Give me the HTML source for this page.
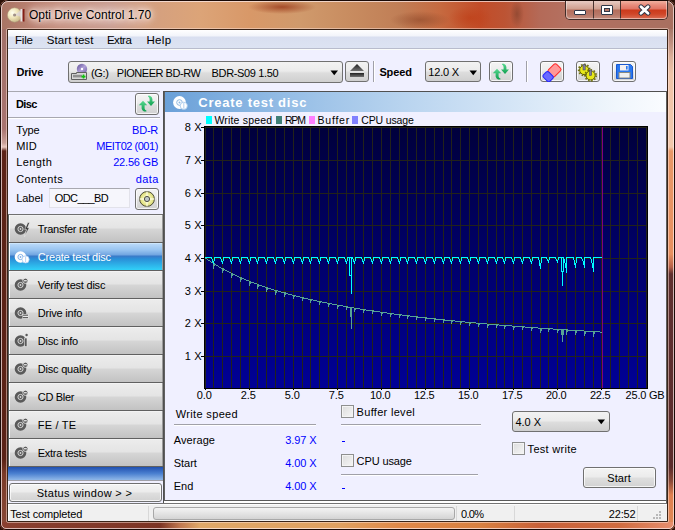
<!DOCTYPE html><html><head><meta charset="utf-8"><style>html,body{margin:0;padding:0;width:675px;height:530px;overflow:hidden;background:#2a1008}</style></head><body><div style="position:relative;width:675px;height:530px;overflow:hidden"><div style="position:absolute;left:0;top:0;width:675px;height:530px;border-radius:8px 8px 6px 6px;overflow:hidden;background:#6a2c1c">
<div style="position:absolute;left:0;top:0;width:675px;height:30px;background:radial-gradient(ellipse 34px 7px at 282px 7px,rgba(150,50,20,0.75),rgba(150,50,20,0) 100%),radial-gradient(ellipse 30px 9px at 420px 20px,rgba(140,70,40,0.6),rgba(140,70,40,0) 100%),radial-gradient(ellipse 7px 14px at 517px 14px,rgba(120,60,40,0.55),rgba(120,60,40,0) 100%),radial-gradient(ellipse 22px 12px at 470px 18px,rgba(190,60,20,0.6),rgba(190,60,20,0) 100%),linear-gradient(90deg,#a87464 0px,#b88070 30px,#c49080 60px,#c89c90 110px,#d4a080 150px,#dca478 200px,#d89868 250px,#d09a6c 300px,#c88c60 350px,#c07e56 400px,#c66a40 440px,#c24c28 480px,#bc5434 505px,#b46a58 540px,#b47060 565px,#a87060 675px)"></div>
<div style="position:absolute;left:0;top:29px;width:8px;height:501px;background:linear-gradient(180deg,#a27068 0px,#a87470 100px,#c8a098 114px,#e8c8c0 118px,#5c2418 122px,#5a2216 430px,#7a3a28 445px,#8a4a38 501px)"></div>
<div style="position:absolute;left:667px;top:29px;width:8px;height:501px;background:linear-gradient(180deg,#a87868 0px,#c09080 14px,#dcb09a 28px,#f0c4a8 45px,#f2c8ac 118px,#e89868 122px,#e89060 225px,#b86048 238px,#603030 245px,#5c2c2c 438px,#8a4a38 452px,#e08050 466px,#e08a58 501px)"></div>
<div style="position:absolute;left:0;top:522px;width:675px;height:8px;background:linear-gradient(90deg,#8a4030 0px,#7c3424 160px,#c07850 180px,#e0a868 200px,#e0a060 340px,#e08848 400px,#d88040 480px,#c86038 540px,#d06c40 620px,#e89070 675px)"></div>
<div style="position:absolute;left:0;top:0;width:673px;height:528px;border:1px solid #1a0a06;border-radius:8px 8px 6px 6px"></div>
<div style="position:absolute;left:1px;top:1px;width:671px;height:526px;border:1px solid rgba(255,240,240,0.7);border-radius:7px 7px 5px 5px"></div>
</div>
<div style="position:absolute;left:7px;top:29px;width:661px;height:493px;border:1px solid #3a2418;box-sizing:border-box;"></div>
<div style="position:absolute;left:6px;top:28px;width:663px;height:495px;border:1px solid rgba(255,230,220,0.5);box-sizing:border-box;border-radius:2px;"></div>
<div style="position:absolute;left:565px;top:0px;width:103px;height:20px;border:1px solid #402c28;border-top:none;border-radius:0 0 5px 5px;box-sizing:border-box;overflow:hidden;background:#b07060">
<div style="position:absolute;left:0;top:1px;width:27px;height:18px;background:linear-gradient(180deg,#e8ccc4 0px,#dcb4a8 4px,#d0a090 8px,#b46e5c 9px,#b87a6a 14px,#c89080 18px)"></div>
<div style="position:absolute;left:27px;top:0;width:1px;height:19px;background:#4a3430"></div>
<div style="position:absolute;left:28px;top:1px;width:26px;height:18px;background:linear-gradient(180deg,#e8ccc4 0px,#dcb4a8 4px,#d0a090 8px,#b46e5c 9px,#b87a6a 14px,#c89080 18px)"></div>
<div style="position:absolute;left:54px;top:0;width:1px;height:19px;background:#4a3430"></div>
<div style="position:absolute;left:55px;top:1px;width:47px;height:18px;background:linear-gradient(180deg,#f0b0a0 0px,#e88c7c 4px,#e07464 8px,#cc3a1c 9px,#d04628 13px,#d8664c 17px,#e89884 18px)"></div>
</div>
<div style="position:absolute;left:565px;top:0px;width:103px;height:1px;background:#1a0a06;"></div>
<div style="position:absolute;left:566px;top:1px;width:101px;height:18px;border:1px solid rgba(255,255,255,0.4);border-top:none;border-radius:0 0 4px 4px;box-sizing:border-box;"></div>
<div style="position:absolute;left:574px;top:10px;width:12px;height:5px;background:#fff;border:1px solid #303848;box-sizing:border-box;border-radius:1px"></div>
<div style="position:absolute;left:601px;top:5px;width:12px;height:10px;background:#fff;border:1px solid #303848;box-sizing:border-box;border-radius:1px"></div>
<div style="position:absolute;left:604px;top:8px;width:6px;height:4px;background:#b87a6a;border:1px solid #303848;box-sizing:border-box;"></div>
<svg style="position:absolute;left:638px;top:4px" width="13" height="12" viewBox="0 0 13 12"><path d="M3 2.8 L10 9.2 M10 2.8 L3 9.2" stroke="#303848" stroke-width="4.8" stroke-linecap="round"/><path d="M3 2.8 L10 9.2 M10 2.8 L3 9.2" stroke="#fff" stroke-width="2.8" stroke-linecap="round"/></svg>
<svg style="position:absolute;left:7px;top:6px" width="19" height="18" viewBox="0 0 19 18"><defs><radialGradient id="dg" cx="0.35" cy="0.35" r="0.7"><stop offset="0" stop-color="#fffff0"/><stop offset="0.5" stop-color="#efe4b8"/><stop offset="1" stop-color="#c8b888"/></radialGradient></defs><circle cx="7.6" cy="9" r="7.2" fill="url(#dg)" stroke="#a89878" stroke-width="0.5"/><path d="M7.6 9 L14 4 A7.2 7.2 0 0 1 14.6 11 Z" fill="#d8d0f0" opacity="0.5"/><circle cx="7.6" cy="9" r="1.6" fill="#a09088"/><rect x="13.5" y="3" width="2.5" height="12.5" fill="#e8e4e4"/><rect x="15.5" y="3" width="2" height="12.5" fill="#801810"/></svg>
<div style="position:absolute;left:30px;top:8px;width:122px;height:14px;background:rgba(255,238,232,0.45);border-radius:7px;filter:blur(4px);"></div>
<div style="position:absolute;left:29px;top:5px;font:12px 'Liberation Sans', sans-serif;line-height:20px;color:#000;white-space:pre;text-shadow:0 0 3px rgba(255,245,240,0.8),0 0 6px rgba(255,238,230,0.8),0 0 10px rgba(255,230,220,0.6)">Opti Drive Control 1.70</div>
<div style="position:absolute;left:8px;top:30px;width:659px;height:491px;background:#f0f0ff;"></div>
<div style="position:absolute;left:8px;top:30px;width:659px;height:18px;background:linear-gradient(180deg,#ffffff 0px,#f2f4fa 6px,#d9dff0 7px,#dce3f2 17px);"></div>
<div style="position:absolute;left:8px;top:48px;width:659px;height:1px;background:#b8bccc;"></div>
<div style="position:absolute;left:8px;top:49px;width:659px;height:1px;background:#fafcfa;"></div>
<div style="position:absolute;top:30px;font:normal 11.5px 'Liberation Sans', sans-serif;line-height:20px;color:#000;white-space:pre;letter-spacing:-0.144px;left:14.90px;">File</div>
<div style="position:absolute;top:30px;font:normal 11.5px 'Liberation Sans', sans-serif;line-height:20px;color:#000;white-space:pre;letter-spacing:0.063px;left:46.80px;">Start test</div>
<div style="position:absolute;top:30px;font:normal 11.5px 'Liberation Sans', sans-serif;line-height:20px;color:#000;white-space:pre;letter-spacing:-0.461px;left:106.90px;">Extra</div>
<div style="position:absolute;top:30px;font:normal 11.5px 'Liberation Sans', sans-serif;line-height:20px;color:#000;white-space:pre;letter-spacing:0.348px;left:146.40px;">Help</div>
<div style="position:absolute;top:62px;font:bold 11px 'Liberation Sans', sans-serif;line-height:20px;color:#000;white-space:pre;letter-spacing:-0.133px;left:16.40px;">Drive</div>
<div style="position:absolute;left:68px;top:61px;width:275px;height:22px;border:1px solid #707070;border-radius:3px;box-sizing:border-box;background:linear-gradient(180deg,#f2f2f2 0%,#ebebeb 45%,#dddddd 55%,#cfcfcf 100%);"></div>
<svg style="position:absolute;left:71px;top:63px" width="17" height="18" viewBox="0 0 17 18"><defs><linearGradient id="dv" x1="0" y1="0" x2="1" y2="1"><stop offset="0" stop-color="#5a4a90"/><stop offset="0.5" stop-color="#b0a0d8"/><stop offset="1" stop-color="#6a5aa0"/></linearGradient></defs><circle cx="11" cy="6" r="5.2" fill="url(#dv)"/><circle cx="11" cy="6" r="1.2" fill="#fff"/><path d="M0.5 10.5 H5.5 V9.5 H15.5 V16.5 H0.5 Z" fill="#d8d8d8" stroke="#606060" stroke-width="1"/><rect x="2" y="11.8" width="9" height="2.6" fill="#909090"/><path d="M12.5 11.6 V15.6 M10.5 13.6 H14.5" stroke="#10c010" stroke-width="1.6"/></svg>
<div style="position:absolute;top:63px;font:normal 11px 'Liberation Sans', sans-serif;line-height:20px;color:#000;white-space:pre;letter-spacing:-0.318px;left:90.90px;">(G:)</div>
<div style="position:absolute;top:63px;font:normal 11px 'Liberation Sans', sans-serif;line-height:20px;color:#000;white-space:pre;letter-spacing:-0.470px;left:116.80px;">PIONEER BD-RW</div>
<div style="position:absolute;top:63px;font:normal 11px 'Liberation Sans', sans-serif;line-height:20px;color:#000;white-space:pre;letter-spacing:-0.349px;left:211.60px;">BDR-S09 1.50</div>
<svg style="position:absolute;left:330px;top:70px" width="9" height="6" viewBox="0 0 9 6"><path d="M0.5 0.5 H8 L4.25 5.2 Z" fill="#000"/></svg>
<div style="position:absolute;left:345px;top:61px;width:24px;height:21px;border:1px solid #707070;border-radius:3px;box-sizing:border-box;background:linear-gradient(180deg,#f2f2f2 0%,#ebebeb 45%,#dddddd 55%,#cfcfcf 100%);"></div>
<svg style="position:absolute;left:348px;top:63px" width="18" height="16" viewBox="0 0 18 16"><defs><linearGradient id="ej" x1="0" y1="0" x2="0" y2="1"><stop offset="0" stop-color="#202020"/><stop offset="1" stop-color="#707070"/></linearGradient></defs><path d="M9 1 L16 8 H2 Z" fill="url(#ej)"/><rect x="2" y="10" width="14" height="4" fill="url(#ej)"/></svg>
<div style="position:absolute;left:373px;top:61px;width:1px;height:21px;background:#a0a0a8;"></div>
<div style="position:absolute;left:374px;top:61px;width:1px;height:21px;background:#ffffff;"></div>
<div style="position:absolute;top:62px;font:bold 11px 'Liberation Sans', sans-serif;line-height:20px;color:#000;white-space:pre;letter-spacing:-0.129px;left:379.40px;">Speed</div>
<div style="position:absolute;left:425px;top:61px;width:56px;height:21px;border:1px solid #707070;border-radius:3px;box-sizing:border-box;background:linear-gradient(180deg,#f2f2f2 0%,#ebebeb 45%,#dddddd 55%,#cfcfcf 100%);"></div>
<div style="position:absolute;top:62px;font:normal 11px 'Liberation Sans', sans-serif;line-height:20px;color:#000;white-space:pre;letter-spacing:-0.183px;left:428.30px;">12.0 X</div>
<svg style="position:absolute;left:469px;top:70px" width="9" height="6" viewBox="0 0 9 6"><path d="M0.5 0.5 H8 L4.25 5.2 Z" fill="#000"/></svg>
<div style="position:absolute;left:489px;top:61px;width:24px;height:21px;border:1px solid #707070;border-radius:3px;box-sizing:border-box;background:linear-gradient(180deg,#f4f4f4 0%,#ececec 45%,#dedede 55%,#d2d2d2 100%);box-shadow:inset 0 0 0 1px rgba(255,255,255,0.75);"></div>
<svg style="position:absolute;left:489px;top:61px" width="24" height="21" viewBox="0 0 24 21"><defs><linearGradient id="ga" x1="0" y1="0" x2="0" y2="1"><stop offset="0" stop-color="#58d890"/><stop offset="1" stop-color="#10a050"/></linearGradient></defs><path d="M3.8 12.2 L8 7.8 L12.2 12.2 L9.6 12.2 L9.6 15.6 Q9.8 17.2 11.4 17.6 L11.4 18.4 L9 18.4 Q7 17.6 6.6 15.6 L6.6 12.2 Z" fill="url(#ga)"/><path d="M12 8.6 L20 8.6 L16 12.9 Z M14.6 8.8 L14.6 6 Q14.4 4.2 13 3.6 L13 2.8 L14.8 2.8 Q17.2 3.6 17.4 6 L17.4 8.8 Z" fill="url(#ga)"/></svg>
<div style="position:absolute;left:526px;top:61px;width:1px;height:21px;background:#a0a0a8;"></div>
<div style="position:absolute;left:527px;top:61px;width:1px;height:21px;background:#ffffff;"></div>
<div style="position:absolute;left:540px;top:61px;width:24px;height:21px;border:1px solid #707070;border-radius:3px;box-sizing:border-box;background:linear-gradient(180deg,#f4f4f4 0%,#ececec 45%,#dedede 55%,#d2d2d2 100%);box-shadow:inset 0 0 0 1px rgba(255,255,255,0.75);"></div>
<svg style="position:absolute;left:540px;top:61px" width="24" height="21" viewBox="0 0 24 21"><g transform="translate(12.2 11.6) rotate(-45)"><rect x="-2.5" y="-4.6" width="11.5" height="9.2" rx="2" fill="#ff9898" stroke="#ff2828" stroke-width="1"/><rect x="-9.5" y="-4.6" width="7.5" height="9.2" rx="2" fill="#6a6aff" stroke="#2424ff" stroke-width="1"/></g></svg>
<div style="position:absolute;left:576px;top:61px;width:24px;height:21px;border:1px solid #707070;border-radius:3px;box-sizing:border-box;background:linear-gradient(180deg,#f4f4f4 0%,#ececec 45%,#dedede 55%,#d2d2d2 100%);box-shadow:inset 0 0 0 1px rgba(255,255,255,0.75);"></div>
<svg style="position:absolute;left:576px;top:61px" width="24" height="21" viewBox="0 0 24 21"><circle cx="8.2" cy="9" r="4.6" fill="#e8e818" stroke="#5a5a00" stroke-width="1"/><circle cx="8.2" cy="9" r="5.6" fill="none" stroke="#707008" stroke-width="1.6" stroke-dasharray="1.6 1.6"/><circle cx="14.6" cy="14.4" r="4.6" fill="#e8e818" stroke="#5a5a00" stroke-width="1"/><circle cx="14.6" cy="14.4" r="5.6" fill="none" stroke="#707008" stroke-width="1.6" stroke-dasharray="1.6 1.6"/><rect x="7" y="3.5" width="2.2" height="5.5" fill="#8080a0" stroke="#404050" stroke-width="0.5"/><rect x="13.5" y="9" width="2.2" height="5.5" fill="#8080a0" stroke="#404050" stroke-width="0.5"/></svg>
<div style="position:absolute;left:612px;top:61px;width:24px;height:21px;border:1px solid #707070;border-radius:3px;box-sizing:border-box;background:linear-gradient(180deg,#f4f4f4 0%,#ececec 45%,#dedede 55%,#d2d2d2 100%);box-shadow:inset 0 0 0 1px rgba(255,255,255,0.75);"></div>
<svg style="position:absolute;left:612px;top:61px" width="24" height="21" viewBox="0 0 24 21"><path d="M4.5 3.5 H18.5 L20.5 5.5 V17.5 H4.5 Z" fill="#2a78f0" stroke="#1a58d0" stroke-width="1"/><rect x="8" y="4" width="8.5" height="5.5" fill="#f4f0f0"/><rect x="14" y="5" width="1.6" height="3.5" fill="#2a78f0"/><rect x="6.5" y="11" width="12" height="6.5" fill="#8a8a80"/><rect x="7.5" y="12" width="10" height="4.5" fill="#f0f0f0"/></svg>
<div style="position:absolute;left:8px;top:91px;width:152px;height:1px;background:#a8a8b0;"></div>
<div style="position:absolute;top:94px;font:bold 11px 'Liberation Sans', sans-serif;line-height:20px;color:#000;white-space:pre;letter-spacing:-0.583px;left:15.90px;">Disc</div>
<div style="position:absolute;left:135px;top:93px;width:24px;height:22px;border:1px solid #707070;border-radius:3px;box-sizing:border-box;background:linear-gradient(180deg,#f4f4f4 0%,#ececec 45%,#dedede 55%,#d2d2d2 100%);box-shadow:inset 0 0 0 1px rgba(255,255,255,0.75);"></div>
<svg style="position:absolute;left:135px;top:93px" width="24" height="21" viewBox="0 0 24 21"><defs><linearGradient id="ga" x1="0" y1="0" x2="0" y2="1"><stop offset="0" stop-color="#58d890"/><stop offset="1" stop-color="#10a050"/></linearGradient></defs><path d="M3.8 12.2 L8 7.8 L12.2 12.2 L9.6 12.2 L9.6 15.6 Q9.8 17.2 11.4 17.6 L11.4 18.4 L9 18.4 Q7 17.6 6.6 15.6 L6.6 12.2 Z" fill="url(#ga)"/><path d="M12 8.6 L20 8.6 L16 12.9 Z M14.6 8.8 L14.6 6 Q14.4 4.2 13 3.6 L13 2.8 L14.8 2.8 Q17.2 3.6 17.4 6 L17.4 8.8 Z" fill="url(#ga)"/></svg>
<div style="position:absolute;left:8px;top:117px;width:152px;height:1px;background:#a8a8b0;"></div>
<div style="position:absolute;left:8px;top:118px;width:152px;height:1px;background:#ffffff;"></div>
<div style="position:absolute;top:120px;font:normal 11px 'Liberation Sans', sans-serif;line-height:20px;color:#000;white-space:pre;letter-spacing:-0.120px;left:16.20px;">Type</div>
<div style="position:absolute;top:120px;font:normal 11px 'Liberation Sans', sans-serif;line-height:20px;color:#0000ff;white-space:pre;letter-spacing:-0.230px;right:516.93px;text-align:right;">BD-R</div>
<div style="position:absolute;top:136px;font:normal 11px 'Liberation Sans', sans-serif;line-height:20px;color:#000;white-space:pre;letter-spacing:0.164px;left:16.20px;">MID</div>
<div style="position:absolute;top:136px;font:normal 11px 'Liberation Sans', sans-serif;line-height:20px;color:#0000ff;white-space:pre;letter-spacing:-0.477px;right:517.18px;text-align:right;">MEIT02 (001)</div>
<div style="position:absolute;top:152px;font:normal 11px 'Liberation Sans', sans-serif;line-height:20px;color:#000;white-space:pre;letter-spacing:0.389px;left:16.20px;">Length</div>
<div style="position:absolute;top:152px;font:normal 11px 'Liberation Sans', sans-serif;line-height:20px;color:#0000ff;white-space:pre;letter-spacing:-0.198px;right:516.90px;text-align:right;">22.56 GB</div>
<div style="position:absolute;top:168.5px;font:normal 11px 'Liberation Sans', sans-serif;line-height:20px;color:#000;white-space:pre;letter-spacing:0.353px;left:16.20px;">Contents</div>
<div style="position:absolute;top:168.5px;font:normal 11px 'Liberation Sans', sans-serif;line-height:20px;color:#0000ff;white-space:pre;letter-spacing:0.359px;right:516.34px;text-align:right;">data</div>
<div style="position:absolute;top:188px;font:normal 11px 'Liberation Sans', sans-serif;line-height:20px;color:#000;white-space:pre;letter-spacing:-0.030px;left:16.20px;">Label</div>
<div style="position:absolute;left:49px;top:188px;width:81px;height:20px;background:#f6f6fc;border:1px solid #e2e2ea;border-top-color:#a8a8b0;box-sizing:border-box;"></div>
<div style="position:absolute;top:188px;font:normal 11px 'Liberation Sans', sans-serif;line-height:20px;color:#000;white-space:pre;letter-spacing:-0.597px;left:54.80px;">ODC___BD</div>
<div style="position:absolute;left:135px;top:188px;width:24px;height:22px;border:1px solid #707070;border-radius:3px;box-sizing:border-box;background:linear-gradient(180deg,#f4f4f4 0%,#ececec 45%,#dedede 55%,#d2d2d2 100%);box-shadow:inset 0 0 0 1px rgba(255,255,255,0.75);"></div>
<svg style="position:absolute;left:135px;top:188px" width="24" height="22" viewBox="0 0 24 22"><defs><radialGradient id="yd" cx="0.5" cy="0.5" r="0.5"><stop offset="0.3" stop-color="#f8f8c0"/><stop offset="0.7" stop-color="#e8e890"/><stop offset="1" stop-color="#d8d878"/></radialGradient></defs><circle cx="12" cy="11" r="7.4" fill="url(#yd)" stroke="#4a4a38" stroke-width="1"/><path d="M12 3.6 L12 18.4 M4.6 11 L19.4 11" stroke="#ffffe8" stroke-width="2.2" opacity="0.6"/><circle cx="12" cy="11" r="2.6" fill="#c0c8c8" stroke="#505048" stroke-width="1"/></svg>
<div style="position:absolute;left:8px;top:214px;width:155px;height:1px;background:#707070;"></div>
<div style="position:absolute;left:10px;top:215px;width:152px;height:27px;background:linear-gradient(180deg,#fafafa 0px,#ececec 1px,#e4e4e4 13px,#d6d6d6 14px,#c2c2c2 27px);"></div>
<div style="position:absolute;left:9px;top:215px;width:1px;height:27px;background:#ffffff;"></div>
<div style="position:absolute;left:8px;top:215px;width:1px;height:27px;background:#5a6060;"></div>
<div style="position:absolute;left:162px;top:215px;width:1px;height:27px;background:#9a9a9a;"></div>
<div style="position:absolute;left:8px;top:242px;width:155px;height:1px;background:#606060;"></div>
<div style="position:absolute;top:219px;font:normal 11px 'Liberation Sans', sans-serif;line-height:20px;color:#000;white-space:pre;letter-spacing:-0.272px;left:37.80px;">Transfer rate</div>
<svg style="position:absolute;left:14px;top:221px" width="16" height="16" viewBox="0 0 16 16"><circle cx="6.5" cy="8" r="5.8" fill="#5a5a5a"/><circle cx="6.5" cy="8" r="2.6" fill="none" stroke="#d8d8d8" stroke-width="1"/><circle cx="6.5" cy="8" r="0.9" fill="#d8d8d8"/><path d="M13.8 1.5 L10.8 8.6 L12.6 8.6 L10.6 15.5 L15.3 6.8 L13.5 6.8 L15.6 1.5 Z" fill="#383838" stroke="#f8f8f8" stroke-width="0.5"/></svg>
<div style="position:absolute;left:10px;top:243px;width:152px;height:27px;background:linear-gradient(180deg,#e0f4ff 0px,#b8d8f8 1px,#98c4f0 7px,#70a4e0 12px,#3a7ac8 13px,#2a90d8 16px,#30d0f8 27px);"></div>
<div style="position:absolute;left:9px;top:243px;width:1px;height:27px;background:#ffffff;"></div>
<div style="position:absolute;left:8px;top:243px;width:1px;height:27px;background:#5a6060;"></div>
<div style="position:absolute;left:162px;top:243px;width:1px;height:27px;background:#9a9a9a;"></div>
<div style="position:absolute;left:8px;top:270px;width:155px;height:1px;background:#606060;"></div>
<div style="position:absolute;top:247px;font:normal 11px 'Liberation Sans', sans-serif;line-height:20px;color:#fff;white-space:pre;letter-spacing:-0.215px;left:37.80px;">Create test disc</div>
<svg style="position:absolute;left:14px;top:249px" width="16" height="16" viewBox="0 0 16 16"><circle cx="6.5" cy="8" r="5.8" fill="#fff"/><circle cx="6.5" cy="8" r="2.6" fill="none" stroke="#80b0e8" stroke-width="1"/><circle cx="6.5" cy="8" r="0.9" fill="#80b0e8"/><circle cx="11.6" cy="10.4" r="3.6" fill="#fff" stroke="#a8c8f0" stroke-width="0.8"/><path d="M11.6 7.5 V13" stroke="#a8c8f0" stroke-width="0.8"/></svg>
<div style="position:absolute;left:10px;top:271px;width:152px;height:27px;background:linear-gradient(180deg,#fafafa 0px,#ececec 1px,#e4e4e4 13px,#d6d6d6 14px,#c2c2c2 27px);"></div>
<div style="position:absolute;left:9px;top:271px;width:1px;height:27px;background:#ffffff;"></div>
<div style="position:absolute;left:8px;top:271px;width:1px;height:27px;background:#5a6060;"></div>
<div style="position:absolute;left:162px;top:271px;width:1px;height:27px;background:#9a9a9a;"></div>
<div style="position:absolute;left:8px;top:298px;width:155px;height:1px;background:#606060;"></div>
<div style="position:absolute;top:275px;font:normal 11px 'Liberation Sans', sans-serif;line-height:20px;color:#000;white-space:pre;letter-spacing:-0.221px;left:37.80px;">Verify test disc</div>
<svg style="position:absolute;left:14px;top:277px" width="16" height="16" viewBox="0 0 16 16"><circle cx="6.5" cy="8" r="5.8" fill="#5a5a5a"/><circle cx="6.5" cy="8" r="2.6" fill="none" stroke="#d8d8d8" stroke-width="1"/><circle cx="6.5" cy="8" r="0.9" fill="#d8d8d8"/><circle cx="11.4" cy="3.8" r="2.6" fill="#5a5a5a" stroke="#f0f0f0" stroke-width="0.8"/><rect x="10" y="3" width="2.8" height="1.4" fill="#d8d8d8"/></svg>
<div style="position:absolute;left:10px;top:299px;width:152px;height:27px;background:linear-gradient(180deg,#fafafa 0px,#ececec 1px,#e4e4e4 13px,#d6d6d6 14px,#c2c2c2 27px);"></div>
<div style="position:absolute;left:9px;top:299px;width:1px;height:27px;background:#ffffff;"></div>
<div style="position:absolute;left:8px;top:299px;width:1px;height:27px;background:#5a6060;"></div>
<div style="position:absolute;left:162px;top:299px;width:1px;height:27px;background:#9a9a9a;"></div>
<div style="position:absolute;left:8px;top:326px;width:155px;height:1px;background:#606060;"></div>
<div style="position:absolute;top:303px;font:normal 11px 'Liberation Sans', sans-serif;line-height:20px;color:#000;white-space:pre;letter-spacing:-0.197px;left:37.80px;">Drive info</div>
<svg style="position:absolute;left:14px;top:305px" width="16" height="16" viewBox="0 0 16 16"><circle cx="6.5" cy="8" r="5.8" fill="#5a5a5a"/><circle cx="6.5" cy="8" r="2.6" fill="none" stroke="#d8d8d8" stroke-width="1"/><circle cx="6.5" cy="8" r="0.9" fill="#d8d8d8"/><rect x="8.5" y="9" width="6" height="5" fill="#e8e8e8"/><rect x="9" y="9.6" width="5" height="1.2" fill="#606060"/><rect x="9" y="12" width="5" height="1.2" fill="#606060"/></svg>
<div style="position:absolute;left:10px;top:327px;width:152px;height:27px;background:linear-gradient(180deg,#fafafa 0px,#ececec 1px,#e4e4e4 13px,#d6d6d6 14px,#c2c2c2 27px);"></div>
<div style="position:absolute;left:9px;top:327px;width:1px;height:27px;background:#ffffff;"></div>
<div style="position:absolute;left:8px;top:327px;width:1px;height:27px;background:#5a6060;"></div>
<div style="position:absolute;left:162px;top:327px;width:1px;height:27px;background:#9a9a9a;"></div>
<div style="position:absolute;left:8px;top:354px;width:155px;height:1px;background:#606060;"></div>
<div style="position:absolute;top:331px;font:normal 11px 'Liberation Sans', sans-serif;line-height:20px;color:#000;white-space:pre;letter-spacing:-0.223px;left:37.80px;">Disc info</div>
<svg style="position:absolute;left:14px;top:333px" width="16" height="16" viewBox="0 0 16 16"><circle cx="6.5" cy="8" r="5.8" fill="#5a5a5a"/><circle cx="6.5" cy="8" r="2.6" fill="none" stroke="#d8d8d8" stroke-width="1"/><circle cx="6.5" cy="8" r="0.9" fill="#d8d8d8"/><rect x="10.6" y="5" width="2.4" height="8.5" fill="#5a5a5a" stroke="#e8e8e8" stroke-width="0.6"/><circle cx="12.6" cy="2" r="1.2" fill="#5a5a5a"/></svg>
<div style="position:absolute;left:10px;top:355px;width:152px;height:27px;background:linear-gradient(180deg,#fafafa 0px,#ececec 1px,#e4e4e4 13px,#d6d6d6 14px,#c2c2c2 27px);"></div>
<div style="position:absolute;left:9px;top:355px;width:1px;height:27px;background:#ffffff;"></div>
<div style="position:absolute;left:8px;top:355px;width:1px;height:27px;background:#5a6060;"></div>
<div style="position:absolute;left:162px;top:355px;width:1px;height:27px;background:#9a9a9a;"></div>
<div style="position:absolute;left:8px;top:382px;width:155px;height:1px;background:#606060;"></div>
<div style="position:absolute;top:359px;font:normal 11px 'Liberation Sans', sans-serif;line-height:20px;color:#000;white-space:pre;letter-spacing:-0.214px;left:37.80px;">Disc quality</div>
<svg style="position:absolute;left:14px;top:361px" width="16" height="16" viewBox="0 0 16 16"><circle cx="6.5" cy="8" r="5.8" fill="#5a5a5a"/><circle cx="6.5" cy="8" r="2.6" fill="none" stroke="#d8d8d8" stroke-width="1"/><circle cx="6.5" cy="8" r="0.9" fill="#d8d8d8"/><circle cx="11.4" cy="3.8" r="2.6" fill="#5a5a5a" stroke="#f0f0f0" stroke-width="0.8"/><rect x="10" y="3" width="2.8" height="1.4" fill="#d8d8d8"/></svg>
<div style="position:absolute;left:10px;top:383px;width:152px;height:27px;background:linear-gradient(180deg,#fafafa 0px,#ececec 1px,#e4e4e4 13px,#d6d6d6 14px,#c2c2c2 27px);"></div>
<div style="position:absolute;left:9px;top:383px;width:1px;height:27px;background:#ffffff;"></div>
<div style="position:absolute;left:8px;top:383px;width:1px;height:27px;background:#5a6060;"></div>
<div style="position:absolute;left:162px;top:383px;width:1px;height:27px;background:#9a9a9a;"></div>
<div style="position:absolute;left:8px;top:410px;width:155px;height:1px;background:#606060;"></div>
<div style="position:absolute;top:387px;font:normal 11px 'Liberation Sans', sans-serif;line-height:20px;color:#000;white-space:pre;letter-spacing:-0.319px;left:37.80px;">CD Bler</div>
<svg style="position:absolute;left:14px;top:389px" width="16" height="16" viewBox="0 0 16 16"><circle cx="6.5" cy="8" r="5.8" fill="#5a5a5a"/><circle cx="6.5" cy="8" r="2.6" fill="none" stroke="#d8d8d8" stroke-width="1"/><circle cx="6.5" cy="8" r="0.9" fill="#d8d8d8"/><circle cx="11.4" cy="3.8" r="2.6" fill="#5a5a5a" stroke="#f0f0f0" stroke-width="0.8"/><rect x="10" y="3" width="2.8" height="1.4" fill="#d8d8d8"/></svg>
<div style="position:absolute;left:10px;top:411px;width:152px;height:27px;background:linear-gradient(180deg,#fafafa 0px,#ececec 1px,#e4e4e4 13px,#d6d6d6 14px,#c2c2c2 27px);"></div>
<div style="position:absolute;left:9px;top:411px;width:1px;height:27px;background:#ffffff;"></div>
<div style="position:absolute;left:8px;top:411px;width:1px;height:27px;background:#5a6060;"></div>
<div style="position:absolute;left:162px;top:411px;width:1px;height:27px;background:#9a9a9a;"></div>
<div style="position:absolute;left:8px;top:438px;width:155px;height:1px;background:#606060;"></div>
<div style="position:absolute;top:415px;font:normal 11px 'Liberation Sans', sans-serif;line-height:20px;color:#000;white-space:pre;letter-spacing:0.184px;left:37.80px;">FE / TE</div>
<svg style="position:absolute;left:14px;top:417px" width="16" height="16" viewBox="0 0 16 16"><circle cx="6.5" cy="8" r="5.8" fill="#5a5a5a"/><circle cx="6.5" cy="8" r="2.6" fill="none" stroke="#d8d8d8" stroke-width="1"/><circle cx="6.5" cy="8" r="0.9" fill="#d8d8d8"/><circle cx="11.4" cy="3.8" r="2.6" fill="#5a5a5a" stroke="#f0f0f0" stroke-width="0.8"/><rect x="10" y="3" width="2.8" height="1.4" fill="#d8d8d8"/></svg>
<div style="position:absolute;left:10px;top:439px;width:152px;height:27px;background:linear-gradient(180deg,#fafafa 0px,#ececec 1px,#e4e4e4 13px,#d6d6d6 14px,#c2c2c2 27px);"></div>
<div style="position:absolute;left:9px;top:439px;width:1px;height:27px;background:#ffffff;"></div>
<div style="position:absolute;left:8px;top:439px;width:1px;height:27px;background:#5a6060;"></div>
<div style="position:absolute;left:162px;top:439px;width:1px;height:27px;background:#9a9a9a;"></div>
<div style="position:absolute;left:8px;top:466px;width:155px;height:1px;background:#606060;"></div>
<div style="position:absolute;top:443px;font:normal 11px 'Liberation Sans', sans-serif;line-height:20px;color:#000;white-space:pre;letter-spacing:-0.297px;left:37.80px;">Extra tests</div>
<svg style="position:absolute;left:14px;top:445px" width="16" height="16" viewBox="0 0 16 16"><circle cx="6.5" cy="8" r="5.8" fill="#5a5a5a"/><circle cx="6.5" cy="8" r="2.6" fill="none" stroke="#d8d8d8" stroke-width="1"/><circle cx="6.5" cy="8" r="0.9" fill="#d8d8d8"/><circle cx="11.4" cy="3.8" r="2.6" fill="#5a5a5a" stroke="#f0f0f0" stroke-width="0.8"/><rect x="10" y="3" width="2.8" height="1.4" fill="#d8d8d8"/></svg>
<div style="position:absolute;left:8px;top:467px;width:155px;height:13px;background:linear-gradient(180deg,#2050b0 0%,#4a80d0 50%,#90b8e8 100%);"></div>
<div style="position:absolute;left:8px;top:480px;width:155px;height:1px;background:#a0a0a8;"></div>
<div style="position:absolute;left:9px;top:483px;width:153px;height:19px;border:1px solid #707070;border-radius:3px;box-sizing:border-box;background:linear-gradient(180deg,#f4f4f4 0%,#ececec 45%,#dedede 55%,#d2d2d2 100%);box-shadow:inset 0 0 0 1px rgba(255,255,255,0.75);"></div>
<div style="position:absolute;top:483px;font:normal 11px 'Liberation Sans', sans-serif;line-height:20px;color:#000;white-space:pre;letter-spacing:0.332px;left:36.70px;">Status window &gt; &gt;</div>
<div style="position:absolute;left:163px;top:91px;width:504px;height:1px;background:#505050;"></div>
<div style="position:absolute;left:163px;top:91px;width:1px;height:412px;background:#505050;"></div>
<div style="position:absolute;left:164px;top:92px;width:1px;height:409px;background:#606060;"></div>
<div style="position:absolute;left:666px;top:91px;width:1px;height:412px;background:#5e5e5e;"></div>
<div style="position:absolute;left:165px;top:500px;width:501px;height:1px;background:#5a5a5a;"></div>
<div style="position:absolute;left:164px;top:501px;width:502px;height:2px;background:#ffffff;"></div>
<div style="position:absolute;left:165px;top:92px;width:501px;height:20px;background:linear-gradient(90deg,#6aa0d8 0%,#96bee6 25%,#bcd6f0 50%,#dceaf8 75%,#f0f6fc 90%,#fafcff 100%);"></div>
<svg style="position:absolute;left:172px;top:95px" width="17" height="16" viewBox="0 0 17 16"><circle cx="7.5" cy="7.5" r="6.4" fill="#fff"/><circle cx="7.5" cy="7.5" r="2.8" fill="none" stroke="#90b8e0" stroke-width="1"/><circle cx="7.5" cy="7.5" r="1" fill="#90b8e0"/><circle cx="11.8" cy="10.8" r="3.6" fill="#fff" stroke="#a0c4e8" stroke-width="0.8"/><path d="M11.8 8 V13.5" stroke="#a0c4e8" stroke-width="0.8"/></svg>
<div style="position:absolute;top:93px;font:bold 13px 'Liberation Sans', sans-serif;line-height:20px;color:#fff;white-space:pre;letter-spacing:0.751px;left:198.30px;">Create test disc</div>
<div style="position:absolute;left:204px;top:126px;width:444px;height:263px;background:#000;"></div>
<div style="position:absolute;left:205px;top:127px;width:442px;height:261px;background:linear-gradient(180deg,#00003c 0%,#000096 100%);"></div>
<svg style="position:absolute;left:0;top:0" width="675" height="530" viewBox="0 0 675 530" shape-rendering="crispEdges"><rect x="205" y="127" width="1" height="261" fill="#22221a"/><rect x="213" y="127" width="1" height="261" fill="#22221a"/><rect x="222" y="127" width="1" height="261" fill="#22221a"/><rect x="231" y="127" width="1" height="261" fill="#22221a"/><rect x="240" y="127" width="1" height="261" fill="#22221a"/><rect x="249" y="127" width="1" height="261" fill="#22221a"/><rect x="257" y="127" width="1" height="261" fill="#22221a"/><rect x="266" y="127" width="1" height="261" fill="#22221a"/><rect x="275" y="127" width="1" height="261" fill="#22221a"/><rect x="284" y="127" width="1" height="261" fill="#22221a"/><rect x="293" y="127" width="1" height="261" fill="#22221a"/><rect x="302" y="127" width="1" height="261" fill="#22221a"/><rect x="310" y="127" width="1" height="261" fill="#22221a"/><rect x="319" y="127" width="1" height="261" fill="#22221a"/><rect x="328" y="127" width="1" height="261" fill="#22221a"/><rect x="337" y="127" width="1" height="261" fill="#22221a"/><rect x="346" y="127" width="1" height="261" fill="#22221a"/><rect x="354" y="127" width="1" height="261" fill="#22221a"/><rect x="363" y="127" width="1" height="261" fill="#22221a"/><rect x="372" y="127" width="1" height="261" fill="#22221a"/><rect x="381" y="127" width="1" height="261" fill="#22221a"/><rect x="390" y="127" width="1" height="261" fill="#22221a"/><rect x="399" y="127" width="1" height="261" fill="#22221a"/><rect x="407" y="127" width="1" height="261" fill="#22221a"/><rect x="416" y="127" width="1" height="261" fill="#22221a"/><rect x="425" y="127" width="1" height="261" fill="#22221a"/><rect x="434" y="127" width="1" height="261" fill="#22221a"/><rect x="443" y="127" width="1" height="261" fill="#22221a"/><rect x="451" y="127" width="1" height="261" fill="#22221a"/><rect x="460" y="127" width="1" height="261" fill="#22221a"/><rect x="469" y="127" width="1" height="261" fill="#22221a"/><rect x="478" y="127" width="1" height="261" fill="#22221a"/><rect x="487" y="127" width="1" height="261" fill="#22221a"/><rect x="496" y="127" width="1" height="261" fill="#22221a"/><rect x="504" y="127" width="1" height="261" fill="#22221a"/><rect x="513" y="127" width="1" height="261" fill="#22221a"/><rect x="522" y="127" width="1" height="261" fill="#22221a"/><rect x="531" y="127" width="1" height="261" fill="#22221a"/><rect x="540" y="127" width="1" height="261" fill="#22221a"/><rect x="548" y="127" width="1" height="261" fill="#22221a"/><rect x="557" y="127" width="1" height="261" fill="#22221a"/><rect x="566" y="127" width="1" height="261" fill="#22221a"/><rect x="575" y="127" width="1" height="261" fill="#22221a"/><rect x="584" y="127" width="1" height="261" fill="#22221a"/><rect x="593" y="127" width="1" height="261" fill="#22221a"/><rect x="601" y="127" width="1" height="261" fill="#22221a"/><rect x="610" y="127" width="1" height="261" fill="#22221a"/><rect x="619" y="127" width="1" height="261" fill="#22221a"/><rect x="628" y="127" width="1" height="261" fill="#22221a"/><rect x="637" y="127" width="1" height="261" fill="#22221a"/><rect x="646" y="127" width="1" height="261" fill="#22221a"/><rect x="205" y="127" width="442" height="1" fill="#22221a"/><rect x="201" y="127" width="3" height="1" fill="#000"/><rect x="205" y="160" width="442" height="1" fill="#22221a"/><rect x="201" y="160" width="3" height="1" fill="#000"/><rect x="205" y="193" width="442" height="1" fill="#22221a"/><rect x="201" y="193" width="3" height="1" fill="#000"/><rect x="205" y="225" width="442" height="1" fill="#22221a"/><rect x="201" y="225" width="3" height="1" fill="#000"/><rect x="205" y="258" width="442" height="1" fill="#22221a"/><rect x="201" y="258" width="3" height="1" fill="#000"/><rect x="205" y="291" width="442" height="1" fill="#22221a"/><rect x="201" y="291" width="3" height="1" fill="#000"/><rect x="205" y="323" width="442" height="1" fill="#22221a"/><rect x="201" y="323" width="3" height="1" fill="#000"/><rect x="205" y="356" width="442" height="1" fill="#22221a"/><rect x="201" y="356" width="3" height="1" fill="#000"/><rect x="602" y="127" width="1" height="261" fill="#800080"/></svg>
<svg style="position:absolute;left:0;top:0" width="675" height="530" viewBox="0 0 675 530" shape-rendering="crispEdges"><g fill="#58a494"><rect x="205" y="258" width="1" height="1"/><rect x="206" y="258" width="1" height="1"/><rect x="207" y="259" width="1" height="1"/><rect x="208" y="260" width="1" height="1"/><rect x="209" y="260" width="1" height="1"/><rect x="210" y="261" width="1" height="1"/><rect x="211" y="262" width="1" height="1"/><rect x="212" y="262" width="1" height="1"/><rect x="213" y="263" width="1" height="6"/><rect x="214" y="263" width="1" height="3"/><rect x="215" y="264" width="1" height="1"/><rect x="216" y="265" width="1" height="1"/><rect x="217" y="265" width="1" height="1"/><rect x="218" y="266" width="1" height="1"/><rect x="219" y="267" width="1" height="1"/><rect x="220" y="267" width="1" height="1"/><rect x="221" y="268" width="1" height="1"/><rect x="222" y="268" width="1" height="5"/><rect x="223" y="268" width="1" height="3"/><rect x="224" y="269" width="1" height="1"/><rect x="225" y="270" width="1" height="1"/><rect x="226" y="270" width="1" height="1"/><rect x="227" y="271" width="1" height="1"/><rect x="228" y="271" width="1" height="1"/><rect x="229" y="272" width="1" height="1"/><rect x="230" y="272" width="1" height="1"/><rect x="231" y="273" width="1" height="5"/><rect x="232" y="273" width="1" height="3"/><rect x="233" y="274" width="1" height="1"/><rect x="234" y="274" width="1" height="1"/><rect x="235" y="275" width="1" height="1"/><rect x="236" y="275" width="1" height="1"/><rect x="237" y="276" width="1" height="1"/><rect x="238" y="276" width="1" height="1"/><rect x="239" y="277" width="1" height="1"/><rect x="240" y="277" width="1" height="5"/><rect x="241" y="277" width="1" height="3"/><rect x="242" y="278" width="1" height="1"/><rect x="243" y="278" width="1" height="1"/><rect x="244" y="279" width="1" height="1"/><rect x="245" y="279" width="1" height="1"/><rect x="246" y="280" width="1" height="1"/><rect x="247" y="280" width="1" height="1"/><rect x="248" y="280" width="1" height="1"/><rect x="249" y="281" width="1" height="5"/><rect x="250" y="281" width="1" height="3"/><rect x="251" y="282" width="1" height="1"/><rect x="252" y="282" width="1" height="1"/><rect x="253" y="282" width="1" height="1"/><rect x="254" y="283" width="1" height="1"/><rect x="255" y="283" width="1" height="1"/><rect x="256" y="283" width="1" height="1"/><rect x="257" y="284" width="1" height="5"/><rect x="258" y="284" width="1" height="3"/><rect x="259" y="285" width="1" height="1"/><rect x="260" y="285" width="1" height="1"/><rect x="261" y="285" width="1" height="1"/><rect x="262" y="286" width="1" height="1"/><rect x="263" y="286" width="1" height="1"/><rect x="264" y="286" width="1" height="1"/><rect x="265" y="287" width="1" height="1"/><rect x="266" y="287" width="1" height="5"/><rect x="267" y="287" width="1" height="3"/><rect x="268" y="288" width="1" height="1"/><rect x="269" y="288" width="1" height="1"/><rect x="270" y="288" width="1" height="1"/><rect x="271" y="289" width="1" height="1"/><rect x="272" y="289" width="1" height="1"/><rect x="273" y="289" width="1" height="1"/><rect x="274" y="290" width="1" height="1"/><rect x="275" y="290" width="1" height="5"/><rect x="276" y="290" width="1" height="3"/><rect x="277" y="290" width="1" height="1"/><rect x="278" y="291" width="1" height="1"/><rect x="279" y="291" width="1" height="1"/><rect x="280" y="291" width="1" height="1"/><rect x="281" y="292" width="1" height="1"/><rect x="282" y="292" width="1" height="1"/><rect x="283" y="292" width="1" height="1"/><rect x="284" y="292" width="1" height="5"/><rect x="285" y="292" width="1" height="3"/><rect x="286" y="293" width="1" height="1"/><rect x="287" y="293" width="1" height="1"/><rect x="288" y="294" width="1" height="1"/><rect x="289" y="294" width="1" height="1"/><rect x="290" y="294" width="1" height="1"/><rect x="291" y="294" width="1" height="1"/><rect x="292" y="295" width="1" height="1"/><rect x="293" y="295" width="1" height="4"/><rect x="294" y="295" width="1" height="2"/><rect x="295" y="295" width="1" height="1"/><rect x="296" y="296" width="1" height="1"/><rect x="297" y="296" width="1" height="1"/><rect x="298" y="296" width="1" height="1"/><rect x="299" y="296" width="1" height="1"/><rect x="300" y="297" width="1" height="1"/><rect x="301" y="297" width="1" height="1"/><rect x="302" y="297" width="1" height="4"/><rect x="303" y="297" width="1" height="2"/><rect x="304" y="298" width="1" height="1"/><rect x="305" y="298" width="1" height="1"/><rect x="306" y="298" width="1" height="1"/><rect x="307" y="298" width="1" height="1"/><rect x="308" y="299" width="1" height="1"/><rect x="309" y="299" width="1" height="1"/><rect x="310" y="299" width="1" height="4"/><rect x="311" y="299" width="1" height="2"/><rect x="312" y="299" width="1" height="1"/><rect x="313" y="300" width="1" height="1"/><rect x="314" y="300" width="1" height="1"/><rect x="315" y="300" width="1" height="1"/><rect x="316" y="300" width="1" height="1"/><rect x="317" y="301" width="1" height="1"/><rect x="318" y="301" width="1" height="1"/><rect x="319" y="301" width="1" height="4"/><rect x="320" y="301" width="1" height="2"/><rect x="321" y="301" width="1" height="1"/><rect x="322" y="302" width="1" height="1"/><rect x="323" y="302" width="1" height="1"/><rect x="324" y="302" width="1" height="1"/><rect x="325" y="302" width="1" height="1"/><rect x="326" y="302" width="1" height="1"/><rect x="327" y="303" width="1" height="1"/><rect x="328" y="303" width="1" height="4"/><rect x="329" y="303" width="1" height="2"/><rect x="330" y="303" width="1" height="1"/><rect x="331" y="303" width="1" height="1"/><rect x="332" y="304" width="1" height="1"/><rect x="333" y="304" width="1" height="1"/><rect x="334" y="304" width="1" height="1"/><rect x="335" y="304" width="1" height="1"/><rect x="336" y="304" width="1" height="1"/><rect x="337" y="305" width="1" height="4"/><rect x="338" y="305" width="1" height="2"/><rect x="339" y="305" width="1" height="1"/><rect x="340" y="305" width="1" height="1"/><rect x="341" y="305" width="1" height="1"/><rect x="342" y="305" width="1" height="1"/><rect x="343" y="306" width="1" height="1"/><rect x="344" y="306" width="1" height="1"/><rect x="345" y="306" width="1" height="1"/><rect x="346" y="306" width="1" height="4"/><rect x="347" y="306" width="1" height="2"/><rect x="348" y="307" width="1" height="1"/><rect x="349" y="307" width="1" height="1"/><rect x="350" y="307" width="1" height="10"/><rect x="351" y="307" width="1" height="22"/><rect x="352" y="307" width="1" height="1"/><rect x="353" y="307" width="1" height="1"/><rect x="354" y="308" width="1" height="4"/><rect x="355" y="308" width="1" height="2"/><rect x="356" y="308" width="1" height="1"/><rect x="357" y="308" width="1" height="1"/><rect x="358" y="308" width="1" height="1"/><rect x="359" y="308" width="1" height="1"/><rect x="360" y="309" width="1" height="1"/><rect x="361" y="309" width="1" height="1"/><rect x="362" y="309" width="1" height="1"/><rect x="363" y="309" width="1" height="4"/><rect x="364" y="309" width="1" height="2"/><rect x="365" y="309" width="1" height="1"/><rect x="366" y="310" width="1" height="1"/><rect x="367" y="310" width="1" height="1"/><rect x="368" y="310" width="1" height="1"/><rect x="369" y="310" width="1" height="1"/><rect x="370" y="310" width="1" height="1"/><rect x="371" y="310" width="1" height="1"/><rect x="372" y="310" width="1" height="4"/><rect x="373" y="310" width="1" height="2"/><rect x="374" y="311" width="1" height="1"/><rect x="375" y="311" width="1" height="1"/><rect x="376" y="311" width="1" height="1"/><rect x="377" y="311" width="1" height="1"/><rect x="378" y="311" width="1" height="1"/><rect x="379" y="311" width="1" height="1"/><rect x="380" y="312" width="1" height="1"/><rect x="381" y="312" width="1" height="4"/><rect x="382" y="312" width="1" height="2"/><rect x="383" y="312" width="1" height="1"/><rect x="384" y="312" width="1" height="1"/><rect x="385" y="312" width="1" height="1"/><rect x="386" y="312" width="1" height="1"/><rect x="387" y="313" width="1" height="1"/><rect x="388" y="313" width="1" height="1"/><rect x="389" y="313" width="1" height="1"/><rect x="390" y="313" width="1" height="4"/><rect x="391" y="313" width="1" height="2"/><rect x="392" y="313" width="1" height="1"/><rect x="393" y="313" width="1" height="1"/><rect x="394" y="314" width="1" height="1"/><rect x="395" y="314" width="1" height="1"/><rect x="396" y="314" width="1" height="1"/><rect x="397" y="314" width="1" height="1"/><rect x="398" y="314" width="1" height="1"/><rect x="399" y="314" width="1" height="4"/><rect x="400" y="314" width="1" height="2"/><rect x="401" y="314" width="1" height="1"/><rect x="402" y="315" width="1" height="1"/><rect x="403" y="315" width="1" height="1"/><rect x="404" y="315" width="1" height="1"/><rect x="405" y="315" width="1" height="1"/><rect x="406" y="315" width="1" height="1"/><rect x="407" y="315" width="1" height="4"/><rect x="408" y="315" width="1" height="2"/><rect x="409" y="315" width="1" height="1"/><rect x="410" y="316" width="1" height="1"/><rect x="411" y="316" width="1" height="1"/><rect x="412" y="316" width="1" height="1"/><rect x="413" y="316" width="1" height="1"/><rect x="414" y="316" width="1" height="1"/><rect x="415" y="316" width="1" height="1"/><rect x="416" y="316" width="1" height="4"/><rect x="417" y="316" width="1" height="2"/><rect x="418" y="317" width="1" height="1"/><rect x="419" y="317" width="1" height="1"/><rect x="420" y="317" width="1" height="1"/><rect x="421" y="317" width="1" height="1"/><rect x="422" y="317" width="1" height="1"/><rect x="423" y="317" width="1" height="1"/><rect x="424" y="317" width="1" height="1"/><rect x="425" y="317" width="1" height="4"/><rect x="426" y="317" width="1" height="2"/><rect x="427" y="318" width="1" height="1"/><rect x="428" y="318" width="1" height="1"/><rect x="429" y="318" width="1" height="1"/><rect x="430" y="318" width="1" height="1"/><rect x="431" y="318" width="1" height="1"/><rect x="432" y="318" width="1" height="1"/><rect x="433" y="318" width="1" height="1"/><rect x="434" y="318" width="1" height="4"/><rect x="435" y="318" width="1" height="2"/><rect x="436" y="319" width="1" height="1"/><rect x="437" y="319" width="1" height="1"/><rect x="438" y="319" width="1" height="1"/><rect x="439" y="319" width="1" height="1"/><rect x="440" y="319" width="1" height="1"/><rect x="441" y="319" width="1" height="1"/><rect x="442" y="319" width="1" height="1"/><rect x="443" y="319" width="1" height="4"/><rect x="444" y="319" width="1" height="2"/><rect x="445" y="320" width="1" height="1"/><rect x="446" y="320" width="1" height="1"/><rect x="447" y="320" width="1" height="1"/><rect x="448" y="320" width="1" height="1"/><rect x="449" y="320" width="1" height="1"/><rect x="450" y="320" width="1" height="1"/><rect x="451" y="320" width="1" height="4"/><rect x="452" y="320" width="1" height="2"/><rect x="453" y="320" width="1" height="1"/><rect x="454" y="320" width="1" height="1"/><rect x="455" y="321" width="1" height="1"/><rect x="456" y="321" width="1" height="1"/><rect x="457" y="321" width="1" height="1"/><rect x="458" y="321" width="1" height="1"/><rect x="459" y="321" width="1" height="1"/><rect x="460" y="321" width="1" height="4"/><rect x="461" y="321" width="1" height="2"/><rect x="462" y="321" width="1" height="1"/><rect x="463" y="321" width="1" height="1"/><rect x="464" y="321" width="1" height="1"/><rect x="465" y="322" width="1" height="1"/><rect x="466" y="322" width="1" height="1"/><rect x="467" y="322" width="1" height="1"/><rect x="468" y="322" width="1" height="1"/><rect x="469" y="322" width="1" height="4"/><rect x="470" y="322" width="1" height="2"/><rect x="471" y="322" width="1" height="1"/><rect x="472" y="322" width="1" height="1"/><rect x="473" y="322" width="1" height="1"/><rect x="474" y="322" width="1" height="1"/><rect x="475" y="322" width="1" height="1"/><rect x="476" y="323" width="1" height="1"/><rect x="477" y="323" width="1" height="1"/><rect x="478" y="323" width="1" height="4"/><rect x="479" y="323" width="1" height="2"/><rect x="480" y="323" width="1" height="1"/><rect x="481" y="323" width="1" height="1"/><rect x="482" y="323" width="1" height="1"/><rect x="483" y="323" width="1" height="1"/><rect x="484" y="323" width="1" height="1"/><rect x="485" y="323" width="1" height="1"/><rect x="486" y="323" width="1" height="1"/><rect x="487" y="324" width="1" height="4"/><rect x="488" y="324" width="1" height="2"/><rect x="489" y="324" width="1" height="1"/><rect x="490" y="324" width="1" height="1"/><rect x="491" y="324" width="1" height="1"/><rect x="492" y="324" width="1" height="1"/><rect x="493" y="324" width="1" height="1"/><rect x="494" y="324" width="1" height="1"/><rect x="495" y="324" width="1" height="1"/><rect x="496" y="324" width="1" height="4"/><rect x="497" y="324" width="1" height="2"/><rect x="498" y="324" width="1" height="1"/><rect x="499" y="325" width="1" height="1"/><rect x="500" y="325" width="1" height="1"/><rect x="501" y="325" width="1" height="1"/><rect x="502" y="325" width="1" height="1"/><rect x="503" y="325" width="1" height="1"/><rect x="504" y="325" width="1" height="4"/><rect x="505" y="325" width="1" height="2"/><rect x="506" y="325" width="1" height="1"/><rect x="507" y="325" width="1" height="1"/><rect x="508" y="325" width="1" height="1"/><rect x="509" y="325" width="1" height="1"/><rect x="510" y="325" width="1" height="1"/><rect x="511" y="325" width="1" height="1"/><rect x="512" y="326" width="1" height="1"/><rect x="513" y="326" width="1" height="4"/><rect x="514" y="326" width="1" height="2"/><rect x="515" y="326" width="1" height="1"/><rect x="516" y="326" width="1" height="1"/><rect x="517" y="326" width="1" height="1"/><rect x="518" y="326" width="1" height="1"/><rect x="519" y="326" width="1" height="1"/><rect x="520" y="326" width="1" height="1"/><rect x="521" y="326" width="1" height="1"/><rect x="522" y="326" width="1" height="4"/><rect x="523" y="326" width="1" height="2"/><rect x="524" y="326" width="1" height="1"/><rect x="525" y="327" width="1" height="1"/><rect x="526" y="327" width="1" height="1"/><rect x="527" y="327" width="1" height="1"/><rect x="528" y="327" width="1" height="1"/><rect x="529" y="327" width="1" height="1"/><rect x="530" y="327" width="1" height="1"/><rect x="531" y="327" width="1" height="4"/><rect x="532" y="327" width="1" height="2"/><rect x="533" y="327" width="1" height="1"/><rect x="534" y="327" width="1" height="1"/><rect x="535" y="327" width="1" height="1"/><rect x="536" y="327" width="1" height="1"/><rect x="537" y="327" width="1" height="1"/><rect x="538" y="328" width="1" height="1"/><rect x="539" y="328" width="1" height="1"/><rect x="540" y="328" width="1" height="5"/><rect x="541" y="328" width="1" height="3"/><rect x="542" y="328" width="1" height="1"/><rect x="543" y="328" width="1" height="1"/><rect x="544" y="328" width="1" height="1"/><rect x="545" y="328" width="1" height="1"/><rect x="546" y="328" width="1" height="1"/><rect x="547" y="328" width="1" height="1"/><rect x="548" y="328" width="1" height="4"/><rect x="549" y="328" width="1" height="2"/><rect x="550" y="328" width="1" height="1"/><rect x="551" y="328" width="1" height="1"/><rect x="552" y="328" width="1" height="1"/><rect x="553" y="329" width="1" height="1"/><rect x="554" y="329" width="1" height="1"/><rect x="555" y="329" width="1" height="1"/><rect x="556" y="329" width="1" height="1"/><rect x="557" y="329" width="1" height="4"/><rect x="558" y="329" width="1" height="2"/><rect x="559" y="329" width="1" height="1"/><rect x="560" y="329" width="1" height="1"/><rect x="561" y="329" width="1" height="6"/><rect x="562" y="329" width="1" height="13"/><rect x="563" y="329" width="1" height="6"/><rect x="564" y="329" width="1" height="1"/><rect x="565" y="329" width="1" height="1"/><rect x="566" y="329" width="1" height="6"/><rect x="567" y="329" width="1" height="3"/><rect x="568" y="330" width="1" height="1"/><rect x="569" y="330" width="1" height="1"/><rect x="570" y="330" width="1" height="1"/><rect x="571" y="330" width="1" height="1"/><rect x="572" y="330" width="1" height="1"/><rect x="573" y="330" width="1" height="1"/><rect x="574" y="330" width="1" height="1"/><rect x="575" y="330" width="1" height="5"/><rect x="576" y="330" width="1" height="3"/><rect x="577" y="330" width="1" height="1"/><rect x="578" y="330" width="1" height="1"/><rect x="579" y="330" width="1" height="1"/><rect x="580" y="330" width="1" height="1"/><rect x="581" y="330" width="1" height="1"/><rect x="582" y="330" width="1" height="1"/><rect x="583" y="330" width="1" height="1"/><rect x="584" y="331" width="1" height="5"/><rect x="585" y="331" width="1" height="3"/><rect x="586" y="331" width="1" height="1"/><rect x="587" y="331" width="1" height="1"/><rect x="588" y="331" width="1" height="1"/><rect x="589" y="331" width="1" height="1"/><rect x="590" y="331" width="1" height="1"/><rect x="591" y="331" width="1" height="1"/><rect x="592" y="331" width="1" height="1"/><rect x="593" y="331" width="1" height="6"/><rect x="594" y="331" width="1" height="3"/><rect x="595" y="331" width="1" height="1"/><rect x="596" y="331" width="1" height="1"/><rect x="597" y="331" width="1" height="1"/><rect x="598" y="331" width="1" height="1"/><rect x="599" y="331" width="1" height="1"/><rect x="600" y="332" width="1" height="1"/><rect x="601" y="332" width="1" height="1"/></g><g fill="#00ffff"><rect x="205" y="257" width="1" height="1"/><rect x="206" y="257" width="1" height="1"/><rect x="207" y="257" width="1" height="1"/><rect x="208" y="257" width="1" height="1"/><rect x="209" y="257" width="1" height="1"/><rect x="210" y="257" width="1" height="1"/><rect x="211" y="257" width="1" height="2"/><rect x="212" y="259" width="1" height="3"/><rect x="213" y="261" width="1" height="3"/><rect x="214" y="257" width="1" height="4"/><rect x="215" y="257" width="1" height="1"/><rect x="216" y="257" width="1" height="1"/><rect x="217" y="257" width="1" height="1"/><rect x="218" y="257" width="1" height="1"/><rect x="219" y="257" width="1" height="1"/><rect x="220" y="257" width="1" height="2"/><rect x="221" y="259" width="1" height="3"/><rect x="222" y="261" width="1" height="3"/><rect x="223" y="257" width="1" height="4"/><rect x="224" y="257" width="1" height="1"/><rect x="225" y="257" width="1" height="1"/><rect x="226" y="257" width="1" height="1"/><rect x="227" y="257" width="1" height="1"/><rect x="228" y="257" width="1" height="1"/><rect x="229" y="257" width="1" height="2"/><rect x="230" y="259" width="1" height="3"/><rect x="231" y="261" width="1" height="3"/><rect x="232" y="257" width="1" height="4"/><rect x="233" y="257" width="1" height="1"/><rect x="234" y="257" width="1" height="1"/><rect x="235" y="257" width="1" height="1"/><rect x="236" y="257" width="1" height="1"/><rect x="237" y="257" width="1" height="1"/><rect x="238" y="257" width="1" height="2"/><rect x="239" y="259" width="1" height="3"/><rect x="240" y="261" width="1" height="3"/><rect x="241" y="257" width="1" height="4"/><rect x="242" y="257" width="1" height="1"/><rect x="243" y="257" width="1" height="1"/><rect x="244" y="257" width="1" height="1"/><rect x="245" y="257" width="1" height="1"/><rect x="246" y="257" width="1" height="1"/><rect x="247" y="257" width="1" height="2"/><rect x="248" y="259" width="1" height="3"/><rect x="249" y="261" width="1" height="3"/><rect x="250" y="257" width="1" height="4"/><rect x="251" y="257" width="1" height="1"/><rect x="252" y="257" width="1" height="1"/><rect x="253" y="257" width="1" height="1"/><rect x="254" y="257" width="1" height="1"/><rect x="255" y="257" width="1" height="2"/><rect x="256" y="259" width="1" height="3"/><rect x="257" y="261" width="1" height="3"/><rect x="258" y="257" width="1" height="4"/><rect x="259" y="257" width="1" height="1"/><rect x="260" y="257" width="1" height="1"/><rect x="261" y="257" width="1" height="1"/><rect x="262" y="257" width="1" height="1"/><rect x="263" y="257" width="1" height="1"/><rect x="264" y="257" width="1" height="2"/><rect x="265" y="259" width="1" height="3"/><rect x="266" y="261" width="1" height="3"/><rect x="267" y="257" width="1" height="4"/><rect x="268" y="257" width="1" height="1"/><rect x="269" y="257" width="1" height="1"/><rect x="270" y="257" width="1" height="1"/><rect x="271" y="257" width="1" height="1"/><rect x="272" y="257" width="1" height="1"/><rect x="273" y="257" width="1" height="2"/><rect x="274" y="259" width="1" height="3"/><rect x="275" y="261" width="1" height="3"/><rect x="276" y="257" width="1" height="4"/><rect x="277" y="257" width="1" height="1"/><rect x="278" y="257" width="1" height="1"/><rect x="279" y="257" width="1" height="1"/><rect x="280" y="257" width="1" height="1"/><rect x="281" y="257" width="1" height="1"/><rect x="282" y="257" width="1" height="2"/><rect x="283" y="259" width="1" height="3"/><rect x="284" y="261" width="1" height="3"/><rect x="285" y="257" width="1" height="4"/><rect x="286" y="257" width="1" height="1"/><rect x="287" y="257" width="1" height="1"/><rect x="288" y="257" width="1" height="1"/><rect x="289" y="257" width="1" height="1"/><rect x="290" y="257" width="1" height="1"/><rect x="291" y="257" width="1" height="2"/><rect x="292" y="259" width="1" height="3"/><rect x="293" y="261" width="1" height="3"/><rect x="294" y="257" width="1" height="4"/><rect x="295" y="257" width="1" height="1"/><rect x="296" y="257" width="1" height="1"/><rect x="297" y="257" width="1" height="1"/><rect x="298" y="257" width="1" height="1"/><rect x="299" y="257" width="1" height="1"/><rect x="300" y="257" width="1" height="2"/><rect x="301" y="259" width="1" height="3"/><rect x="302" y="261" width="1" height="3"/><rect x="303" y="257" width="1" height="4"/><rect x="304" y="257" width="1" height="1"/><rect x="305" y="257" width="1" height="1"/><rect x="306" y="257" width="1" height="1"/><rect x="307" y="257" width="1" height="1"/><rect x="308" y="257" width="1" height="2"/><rect x="309" y="259" width="1" height="3"/><rect x="310" y="261" width="1" height="3"/><rect x="311" y="257" width="1" height="4"/><rect x="312" y="257" width="1" height="1"/><rect x="313" y="257" width="1" height="1"/><rect x="314" y="257" width="1" height="1"/><rect x="315" y="257" width="1" height="1"/><rect x="316" y="257" width="1" height="1"/><rect x="317" y="257" width="1" height="2"/><rect x="318" y="259" width="1" height="3"/><rect x="319" y="261" width="1" height="3"/><rect x="320" y="257" width="1" height="4"/><rect x="321" y="257" width="1" height="1"/><rect x="322" y="257" width="1" height="1"/><rect x="323" y="257" width="1" height="1"/><rect x="324" y="257" width="1" height="1"/><rect x="325" y="257" width="1" height="1"/><rect x="326" y="257" width="1" height="2"/><rect x="327" y="259" width="1" height="3"/><rect x="328" y="261" width="1" height="3"/><rect x="329" y="257" width="1" height="4"/><rect x="330" y="257" width="1" height="1"/><rect x="331" y="257" width="1" height="1"/><rect x="332" y="257" width="1" height="1"/><rect x="333" y="257" width="1" height="1"/><rect x="334" y="257" width="1" height="1"/><rect x="335" y="257" width="1" height="2"/><rect x="336" y="259" width="1" height="3"/><rect x="337" y="261" width="1" height="3"/><rect x="338" y="257" width="1" height="4"/><rect x="339" y="257" width="1" height="1"/><rect x="340" y="257" width="1" height="1"/><rect x="341" y="257" width="1" height="1"/><rect x="342" y="257" width="1" height="1"/><rect x="343" y="257" width="1" height="1"/><rect x="344" y="257" width="1" height="2"/><rect x="345" y="259" width="1" height="3"/><rect x="346" y="261" width="1" height="3"/><rect x="347" y="257" width="1" height="4"/><rect x="348" y="257" width="1" height="1"/><rect x="349" y="257" width="1" height="19"/><rect x="350" y="257" width="1" height="1"/><rect x="350" y="275" width="1" height="1"/><rect x="351" y="257" width="1" height="37"/><rect x="352" y="257" width="1" height="2"/><rect x="353" y="259" width="1" height="3"/><rect x="354" y="261" width="1" height="3"/><rect x="355" y="257" width="1" height="4"/><rect x="356" y="257" width="1" height="1"/><rect x="357" y="257" width="1" height="1"/><rect x="358" y="257" width="1" height="1"/><rect x="359" y="257" width="1" height="1"/><rect x="360" y="257" width="1" height="1"/><rect x="361" y="257" width="1" height="2"/><rect x="362" y="259" width="1" height="3"/><rect x="363" y="261" width="1" height="3"/><rect x="364" y="257" width="1" height="4"/><rect x="365" y="257" width="1" height="1"/><rect x="366" y="257" width="1" height="1"/><rect x="367" y="257" width="1" height="1"/><rect x="368" y="257" width="1" height="1"/><rect x="369" y="257" width="1" height="1"/><rect x="370" y="257" width="1" height="2"/><rect x="371" y="259" width="1" height="3"/><rect x="372" y="261" width="1" height="3"/><rect x="373" y="257" width="1" height="4"/><rect x="374" y="257" width="1" height="1"/><rect x="375" y="257" width="1" height="1"/><rect x="376" y="257" width="1" height="1"/><rect x="377" y="257" width="1" height="1"/><rect x="378" y="257" width="1" height="1"/><rect x="379" y="257" width="1" height="2"/><rect x="380" y="259" width="1" height="3"/><rect x="381" y="261" width="1" height="3"/><rect x="382" y="257" width="1" height="4"/><rect x="383" y="257" width="1" height="1"/><rect x="384" y="257" width="1" height="1"/><rect x="385" y="257" width="1" height="1"/><rect x="386" y="257" width="1" height="1"/><rect x="387" y="257" width="1" height="1"/><rect x="388" y="257" width="1" height="2"/><rect x="389" y="259" width="1" height="3"/><rect x="390" y="261" width="1" height="3"/><rect x="391" y="257" width="1" height="4"/><rect x="392" y="257" width="1" height="1"/><rect x="393" y="257" width="1" height="1"/><rect x="394" y="257" width="1" height="1"/><rect x="395" y="257" width="1" height="1"/><rect x="396" y="257" width="1" height="1"/><rect x="397" y="257" width="1" height="2"/><rect x="398" y="259" width="1" height="3"/><rect x="399" y="261" width="1" height="3"/><rect x="400" y="257" width="1" height="4"/><rect x="401" y="257" width="1" height="1"/><rect x="402" y="257" width="1" height="1"/><rect x="403" y="257" width="1" height="1"/><rect x="404" y="257" width="1" height="1"/><rect x="405" y="257" width="1" height="2"/><rect x="406" y="259" width="1" height="3"/><rect x="407" y="261" width="1" height="3"/><rect x="408" y="257" width="1" height="4"/><rect x="409" y="257" width="1" height="1"/><rect x="410" y="257" width="1" height="1"/><rect x="411" y="257" width="1" height="1"/><rect x="412" y="257" width="1" height="1"/><rect x="413" y="257" width="1" height="1"/><rect x="414" y="257" width="1" height="2"/><rect x="415" y="259" width="1" height="3"/><rect x="416" y="261" width="1" height="3"/><rect x="417" y="257" width="1" height="4"/><rect x="418" y="257" width="1" height="1"/><rect x="419" y="257" width="1" height="1"/><rect x="420" y="257" width="1" height="1"/><rect x="421" y="257" width="1" height="1"/><rect x="422" y="257" width="1" height="1"/><rect x="423" y="257" width="1" height="2"/><rect x="424" y="259" width="1" height="3"/><rect x="425" y="261" width="1" height="3"/><rect x="426" y="257" width="1" height="4"/><rect x="427" y="257" width="1" height="1"/><rect x="428" y="257" width="1" height="1"/><rect x="429" y="257" width="1" height="1"/><rect x="430" y="257" width="1" height="1"/><rect x="431" y="257" width="1" height="1"/><rect x="432" y="257" width="1" height="2"/><rect x="433" y="259" width="1" height="3"/><rect x="434" y="261" width="1" height="3"/><rect x="435" y="257" width="1" height="4"/><rect x="436" y="257" width="1" height="1"/><rect x="437" y="257" width="1" height="1"/><rect x="438" y="257" width="1" height="1"/><rect x="439" y="257" width="1" height="1"/><rect x="440" y="257" width="1" height="1"/><rect x="441" y="257" width="1" height="2"/><rect x="442" y="259" width="1" height="3"/><rect x="443" y="261" width="1" height="3"/><rect x="444" y="257" width="1" height="4"/><rect x="445" y="257" width="1" height="1"/><rect x="446" y="257" width="1" height="1"/><rect x="447" y="257" width="1" height="1"/><rect x="448" y="257" width="1" height="1"/><rect x="449" y="257" width="1" height="2"/><rect x="450" y="259" width="1" height="3"/><rect x="451" y="261" width="1" height="3"/><rect x="452" y="257" width="1" height="4"/><rect x="453" y="257" width="1" height="1"/><rect x="454" y="257" width="1" height="1"/><rect x="455" y="257" width="1" height="1"/><rect x="456" y="257" width="1" height="1"/><rect x="457" y="257" width="1" height="1"/><rect x="458" y="257" width="1" height="2"/><rect x="459" y="259" width="1" height="3"/><rect x="460" y="261" width="1" height="3"/><rect x="461" y="257" width="1" height="4"/><rect x="462" y="257" width="1" height="1"/><rect x="463" y="257" width="1" height="1"/><rect x="464" y="257" width="1" height="1"/><rect x="465" y="257" width="1" height="1"/><rect x="466" y="257" width="1" height="1"/><rect x="467" y="257" width="1" height="2"/><rect x="468" y="259" width="1" height="3"/><rect x="469" y="261" width="1" height="3"/><rect x="470" y="257" width="1" height="4"/><rect x="471" y="257" width="1" height="1"/><rect x="472" y="257" width="1" height="1"/><rect x="473" y="257" width="1" height="1"/><rect x="474" y="257" width="1" height="1"/><rect x="475" y="257" width="1" height="1"/><rect x="476" y="257" width="1" height="2"/><rect x="477" y="259" width="1" height="3"/><rect x="478" y="261" width="1" height="3"/><rect x="479" y="257" width="1" height="4"/><rect x="480" y="257" width="1" height="1"/><rect x="481" y="257" width="1" height="1"/><rect x="482" y="257" width="1" height="1"/><rect x="483" y="257" width="1" height="1"/><rect x="484" y="257" width="1" height="1"/><rect x="485" y="257" width="1" height="2"/><rect x="486" y="259" width="1" height="3"/><rect x="487" y="261" width="1" height="3"/><rect x="488" y="257" width="1" height="4"/><rect x="489" y="257" width="1" height="1"/><rect x="490" y="257" width="1" height="1"/><rect x="491" y="257" width="1" height="1"/><rect x="492" y="257" width="1" height="1"/><rect x="493" y="257" width="1" height="1"/><rect x="494" y="257" width="1" height="2"/><rect x="495" y="259" width="1" height="3"/><rect x="496" y="261" width="1" height="3"/><rect x="497" y="257" width="1" height="4"/><rect x="498" y="257" width="1" height="1"/><rect x="499" y="257" width="1" height="1"/><rect x="500" y="257" width="1" height="1"/><rect x="501" y="257" width="1" height="1"/><rect x="502" y="257" width="1" height="2"/><rect x="503" y="259" width="1" height="3"/><rect x="504" y="261" width="1" height="3"/><rect x="505" y="257" width="1" height="4"/><rect x="506" y="257" width="1" height="1"/><rect x="507" y="257" width="1" height="1"/><rect x="508" y="257" width="1" height="1"/><rect x="509" y="257" width="1" height="1"/><rect x="510" y="257" width="1" height="1"/><rect x="511" y="257" width="1" height="2"/><rect x="512" y="259" width="1" height="3"/><rect x="513" y="261" width="1" height="3"/><rect x="514" y="257" width="1" height="4"/><rect x="515" y="257" width="1" height="1"/><rect x="516" y="257" width="1" height="1"/><rect x="517" y="257" width="1" height="1"/><rect x="518" y="257" width="1" height="1"/><rect x="519" y="257" width="1" height="1"/><rect x="520" y="257" width="1" height="2"/><rect x="521" y="259" width="1" height="3"/><rect x="522" y="261" width="1" height="3"/><rect x="523" y="257" width="1" height="4"/><rect x="524" y="257" width="1" height="1"/><rect x="525" y="257" width="1" height="1"/><rect x="526" y="257" width="1" height="1"/><rect x="527" y="257" width="1" height="1"/><rect x="528" y="257" width="1" height="1"/><rect x="529" y="257" width="1" height="2"/><rect x="530" y="259" width="1" height="3"/><rect x="531" y="261" width="1" height="3"/><rect x="532" y="257" width="1" height="4"/><rect x="533" y="257" width="1" height="1"/><rect x="534" y="257" width="1" height="1"/><rect x="535" y="257" width="1" height="1"/><rect x="536" y="257" width="1" height="1"/><rect x="537" y="257" width="1" height="1"/><rect x="538" y="257" width="1" height="3"/><rect x="539" y="260" width="1" height="6"/><rect x="540" y="263" width="1" height="6"/><rect x="541" y="257" width="1" height="6"/><rect x="542" y="257" width="1" height="1"/><rect x="543" y="257" width="1" height="1"/><rect x="544" y="257" width="1" height="1"/><rect x="545" y="257" width="1" height="1"/><rect x="546" y="257" width="1" height="2"/><rect x="547" y="259" width="1" height="2"/><rect x="548" y="260" width="1" height="3"/><rect x="549" y="257" width="1" height="3"/><rect x="550" y="257" width="1" height="1"/><rect x="551" y="257" width="1" height="1"/><rect x="552" y="257" width="1" height="1"/><rect x="553" y="257" width="1" height="1"/><rect x="554" y="257" width="1" height="1"/><rect x="555" y="257" width="1" height="2"/><rect x="556" y="259" width="1" height="2"/><rect x="557" y="260" width="1" height="3"/><rect x="558" y="257" width="1" height="3"/><rect x="559" y="257" width="1" height="1"/><rect x="560" y="257" width="1" height="1"/><rect x="561" y="257" width="1" height="15"/><rect x="562" y="257" width="1" height="1"/><rect x="562" y="271" width="1" height="15"/><rect x="563" y="257" width="1" height="15"/><rect x="564" y="259" width="1" height="4"/><rect x="565" y="263" width="1" height="5"/><rect x="566" y="257" width="1" height="16"/><rect x="567" y="257" width="1" height="1"/><rect x="568" y="257" width="1" height="1"/><rect x="569" y="257" width="1" height="1"/><rect x="570" y="257" width="1" height="1"/><rect x="571" y="257" width="1" height="1"/><rect x="572" y="257" width="1" height="1"/><rect x="573" y="257" width="1" height="3"/><rect x="574" y="260" width="1" height="5"/><rect x="575" y="263" width="1" height="5"/><rect x="576" y="257" width="1" height="6"/><rect x="577" y="257" width="1" height="1"/><rect x="578" y="257" width="1" height="1"/><rect x="579" y="257" width="1" height="1"/><rect x="580" y="257" width="1" height="1"/><rect x="581" y="257" width="1" height="2"/><rect x="582" y="259" width="1" height="2"/><rect x="583" y="261" width="1" height="4"/><rect x="584" y="257" width="1" height="11"/><rect x="585" y="257" width="1" height="1"/><rect x="586" y="257" width="1" height="1"/><rect x="587" y="257" width="1" height="1"/><rect x="588" y="257" width="1" height="1"/><rect x="589" y="257" width="1" height="1"/><rect x="590" y="257" width="1" height="2"/><rect x="591" y="259" width="1" height="4"/><rect x="592" y="263" width="1" height="5"/><rect x="593" y="257" width="1" height="15"/><rect x="594" y="257" width="1" height="1"/><rect x="595" y="257" width="1" height="1"/><rect x="596" y="257" width="1" height="1"/><rect x="597" y="257" width="1" height="1"/><rect x="598" y="257" width="1" height="1"/><rect x="599" y="257" width="1" height="1"/><rect x="600" y="257" width="1" height="1"/><rect x="601" y="257" width="1" height="1"/></g></svg>
<div style="position:absolute;left:206px;top:116px;width:6px;height:8px;background:#00ffff;"></div>
<div style="position:absolute;top:110px;font:normal 10.5px 'Liberation Sans', sans-serif;line-height:20px;color:#000;white-space:pre;letter-spacing:0.186px;left:214.40px;">Write speed</div>
<div style="position:absolute;left:276px;top:116px;width:6px;height:8px;background:#408078;"></div>
<div style="position:absolute;top:110px;font:normal 10.5px 'Liberation Sans', sans-serif;line-height:20px;color:#000;white-space:pre;letter-spacing:-1.172px;left:284.90px;">RPM</div>
<div style="position:absolute;left:309px;top:116px;width:6px;height:8px;background:#ff80ff;"></div>
<div style="position:absolute;top:110px;font:normal 10.5px 'Liberation Sans', sans-serif;line-height:20px;color:#000;white-space:pre;letter-spacing:0.774px;left:317.50px;">Buffer</div>
<div style="position:absolute;left:352px;top:116px;width:6px;height:8px;background:#8080ff;"></div>
<div style="position:absolute;top:110px;font:normal 10.5px 'Liberation Sans', sans-serif;line-height:20px;color:#000;white-space:pre;letter-spacing:-0.138px;left:361.20px;">CPU usage</div>
<div style="position:absolute;top:117px;font:normal 11px 'Liberation Sans', sans-serif;line-height:20px;color:#000;white-space:pre;letter-spacing:0.142px;right:473.26px;text-align:right;">8 X</div>
<div style="position:absolute;top:150px;font:normal 11px 'Liberation Sans', sans-serif;line-height:20px;color:#000;white-space:pre;letter-spacing:0.142px;right:473.26px;text-align:right;">7 X</div>
<div style="position:absolute;top:183px;font:normal 11px 'Liberation Sans', sans-serif;line-height:20px;color:#000;white-space:pre;letter-spacing:0.142px;right:473.26px;text-align:right;">6 X</div>
<div style="position:absolute;top:215px;font:normal 11px 'Liberation Sans', sans-serif;line-height:20px;color:#000;white-space:pre;letter-spacing:0.142px;right:473.26px;text-align:right;">5 X</div>
<div style="position:absolute;top:248px;font:normal 11px 'Liberation Sans', sans-serif;line-height:20px;color:#000;white-space:pre;letter-spacing:0.142px;right:473.26px;text-align:right;">4 X</div>
<div style="position:absolute;top:281px;font:normal 11px 'Liberation Sans', sans-serif;line-height:20px;color:#000;white-space:pre;letter-spacing:0.142px;right:473.26px;text-align:right;">3 X</div>
<div style="position:absolute;top:313px;font:normal 11px 'Liberation Sans', sans-serif;line-height:20px;color:#000;white-space:pre;letter-spacing:0.142px;right:473.26px;text-align:right;">2 X</div>
<div style="position:absolute;top:346px;font:normal 11px 'Liberation Sans', sans-serif;line-height:20px;color:#000;white-space:pre;letter-spacing:0.142px;right:473.26px;text-align:right;">1 X</div>
<div style="position:absolute;top:385px;font:normal 11px 'Liberation Sans', sans-serif;line-height:20px;color:#000;white-space:pre;letter-spacing:0.002px;left:104.30px;width:200px;text-align:center;">0.0</div>
<div style="position:absolute;left:205px;top:388px;width:1px;height:2px;background:#000;"></div>
<div style="position:absolute;top:385px;font:normal 11px 'Liberation Sans', sans-serif;line-height:20px;color:#000;white-space:pre;letter-spacing:0.002px;left:148.30px;width:200px;text-align:center;">2.5</div>
<div style="position:absolute;left:249px;top:388px;width:1px;height:2px;background:#000;"></div>
<div style="position:absolute;top:385px;font:normal 11px 'Liberation Sans', sans-serif;line-height:20px;color:#000;white-space:pre;letter-spacing:0.002px;left:192.30px;width:200px;text-align:center;">5.0</div>
<div style="position:absolute;left:293px;top:388px;width:1px;height:2px;background:#000;"></div>
<div style="position:absolute;top:385px;font:normal 11px 'Liberation Sans', sans-serif;line-height:20px;color:#000;white-space:pre;letter-spacing:0.002px;left:236.30px;width:200px;text-align:center;">7.5</div>
<div style="position:absolute;left:337px;top:388px;width:1px;height:2px;background:#000;"></div>
<div style="position:absolute;top:385px;font:normal 11px 'Liberation Sans', sans-serif;line-height:20px;color:#000;white-space:pre;letter-spacing:-0.274px;left:280.16px;width:200px;text-align:center;">10.0</div>
<div style="position:absolute;left:381px;top:388px;width:1px;height:2px;background:#000;"></div>
<div style="position:absolute;top:385px;font:normal 11px 'Liberation Sans', sans-serif;line-height:20px;color:#000;white-space:pre;letter-spacing:-0.274px;left:324.16px;width:200px;text-align:center;">12.5</div>
<div style="position:absolute;left:425px;top:388px;width:1px;height:2px;background:#000;"></div>
<div style="position:absolute;top:385px;font:normal 11px 'Liberation Sans', sans-serif;line-height:20px;color:#000;white-space:pre;letter-spacing:-0.274px;left:368.16px;width:200px;text-align:center;">15.0</div>
<div style="position:absolute;left:469px;top:388px;width:1px;height:2px;background:#000;"></div>
<div style="position:absolute;top:385px;font:normal 11px 'Liberation Sans', sans-serif;line-height:20px;color:#000;white-space:pre;letter-spacing:-0.274px;left:412.16px;width:200px;text-align:center;">17.5</div>
<div style="position:absolute;left:513px;top:388px;width:1px;height:2px;background:#000;"></div>
<div style="position:absolute;top:385px;font:normal 11px 'Liberation Sans', sans-serif;line-height:20px;color:#000;white-space:pre;letter-spacing:-0.274px;left:456.16px;width:200px;text-align:center;">20.0</div>
<div style="position:absolute;left:557px;top:388px;width:1px;height:2px;background:#000;"></div>
<div style="position:absolute;top:385px;font:normal 11px 'Liberation Sans', sans-serif;line-height:20px;color:#000;white-space:pre;letter-spacing:-0.274px;left:500.16px;width:200px;text-align:center;">22.5</div>
<div style="position:absolute;left:601px;top:388px;width:1px;height:2px;background:#000;"></div>
<div style="position:absolute;top:385px;font:normal 11px 'Liberation Sans', sans-serif;line-height:20px;color:#000;white-space:pre;letter-spacing:-0.227px;left:625.60px;">25.0 GB</div>
<div style="position:absolute;top:404px;font:normal 11px 'Liberation Sans', sans-serif;line-height:20px;color:#000;white-space:pre;letter-spacing:0.350px;left:175.70px;">Write speed</div>
<div style="position:absolute;left:174px;top:424px;width:142px;height:1px;background:#a0a0a8;"></div>
<div style="position:absolute;left:174px;top:425px;width:142px;height:1px;background:#ffffff;"></div>
<div style="position:absolute;top:429.7px;font:normal 11px 'Liberation Sans', sans-serif;line-height:20px;color:#000;white-space:pre;letter-spacing:0.086px;left:173.70px;">Average</div>
<div style="position:absolute;top:429.7px;font:normal 11px 'Liberation Sans', sans-serif;line-height:20px;color:#0000ff;white-space:pre;letter-spacing:-0.102px;right:358.50px;text-align:right;">3.97 X</div>
<div style="position:absolute;top:452.8px;font:normal 11px 'Liberation Sans', sans-serif;line-height:20px;color:#000;white-space:pre;left:173.70px;">Start</div>
<div style="position:absolute;top:452.8px;font:normal 11px 'Liberation Sans', sans-serif;line-height:20px;color:#0000ff;white-space:pre;letter-spacing:-0.102px;right:358.50px;text-align:right;">4.00 X</div>
<div style="position:absolute;top:475.8px;font:normal 11px 'Liberation Sans', sans-serif;line-height:20px;color:#000;white-space:pre;left:173.70px;">End</div>
<div style="position:absolute;top:475.8px;font:normal 11px 'Liberation Sans', sans-serif;line-height:20px;color:#0000ff;white-space:pre;letter-spacing:-0.102px;right:358.50px;text-align:right;">4.00 X</div>
<div style="position:absolute;left:341px;top:405px;width:13px;height:13px;border:1px solid #8e8f8f;box-sizing:border-box;background:linear-gradient(135deg,#dcdcdc 0%,#f6f6f6 100%);box-shadow:inset 0 0 0 1px #f4f4f4;"></div>
<div style="position:absolute;top:402px;font:normal 11px 'Liberation Sans', sans-serif;line-height:20px;color:#000;white-space:pre;letter-spacing:0.307px;left:356.60px;">Buffer level</div>
<div style="position:absolute;left:341px;top:424px;width:140px;height:1px;background:#a0a0a8;"></div>
<div style="position:absolute;left:341px;top:425px;width:140px;height:1px;background:#ffffff;"></div>
<div style="position:absolute;left:342px;top:441px;width:3px;height:1px;background:#0000ff;"></div>
<div style="position:absolute;left:341px;top:454px;width:13px;height:13px;border:1px solid #8e8f8f;box-sizing:border-box;background:linear-gradient(135deg,#dcdcdc 0%,#f6f6f6 100%);box-shadow:inset 0 0 0 1px #f4f4f4;"></div>
<div style="position:absolute;top:451px;font:normal 11px 'Liberation Sans', sans-serif;line-height:20px;color:#000;white-space:pre;letter-spacing:-0.108px;left:356.60px;">CPU usage</div>
<div style="position:absolute;left:341px;top:474px;width:137px;height:1px;background:#a0a0a8;"></div>
<div style="position:absolute;left:341px;top:475px;width:137px;height:1px;background:#ffffff;"></div>
<div style="position:absolute;left:342px;top:488px;width:3px;height:1px;background:#0000ff;"></div>
<div style="position:absolute;left:512px;top:411px;width:98px;height:21px;border:1px solid #707070;border-radius:3px;box-sizing:border-box;background:linear-gradient(180deg,#f2f2f2 0%,#ebebeb 45%,#dddddd 55%,#cfcfcf 100%);"></div>
<div style="position:absolute;top:412px;font:normal 11px 'Liberation Sans', sans-serif;line-height:20px;color:#000;white-space:pre;left:515.40px;">4.0 X</div>
<svg style="position:absolute;left:597px;top:419px" width="9" height="6" viewBox="0 0 9 6"><path d="M0.5 0.5 H8 L4.25 5.2 Z" fill="#000"/></svg>
<div style="position:absolute;left:512px;top:442px;width:13px;height:13px;border:1px solid #8e8f8f;box-sizing:border-box;background:linear-gradient(135deg,#dcdcdc 0%,#f6f6f6 100%);box-shadow:inset 0 0 0 1px #f4f4f4;"></div>
<div style="position:absolute;top:439px;font:normal 11px 'Liberation Sans', sans-serif;line-height:20px;color:#000;white-space:pre;letter-spacing:0.292px;left:527.60px;">Test write</div>
<div style="position:absolute;left:583px;top:467px;width:73px;height:21px;border:1px solid #707070;border-radius:3px;box-sizing:border-box;background:linear-gradient(180deg,#f4f4f4 0%,#ececec 45%,#dedede 55%,#d2d2d2 100%);box-shadow:inset 0 0 0 1px rgba(255,255,255,0.75);"></div>
<div style="position:absolute;top:468px;font:normal 11px 'Liberation Sans', sans-serif;line-height:20px;color:#000;white-space:pre;letter-spacing:0.116px;left:607.20px;">Start</div>
<div style="position:absolute;left:8px;top:503px;width:659px;height:1px;background:#747474;"></div>
<div style="position:absolute;left:8px;top:504px;width:659px;height:17px;background:#f0f0f0;border-top:1px solid #fcfcfc;border-left:1px solid #fcfcfc;box-sizing:border-box;"></div>
<div style="position:absolute;top:504px;font:normal 11px 'Liberation Sans', sans-serif;line-height:20px;color:#000;white-space:pre;letter-spacing:-0.145px;left:10.20px;">Test completed</div>
<div style="position:absolute;left:148px;top:506px;width:1px;height:15px;background:#d8d8d8;"></div>
<div style="position:absolute;left:153px;top:507px;width:302px;height:13px;border:1px solid #a8a8a8;border-radius:3px;box-sizing:border-box;background:linear-gradient(180deg,#f4f4f4 0%,#e4e4e4 50%,#d4d4d4 100%);"></div>
<div style="position:absolute;left:456px;top:506px;width:1px;height:15px;background:#d8d8d8;"></div>
<div style="position:absolute;top:504px;font:normal 11px 'Liberation Sans', sans-serif;line-height:20px;color:#000;white-space:pre;letter-spacing:-0.626px;left:460.90px;">0.0%</div>
<div style="position:absolute;left:514px;top:506px;width:1px;height:15px;background:#d8d8d8;"></div>
<div style="position:absolute;top:504px;font:normal 11px 'Liberation Sans', sans-serif;line-height:20px;color:#000;white-space:pre;letter-spacing:-0.158px;left:608.80px;">22:52</div>
<div style="position:absolute;left:637px;top:506px;width:1px;height:15px;background:#d8d8d8;"></div>
<div style="position:absolute;left:659px;top:511px;width:2px;height:2px;background:#b8b8b8;"></div>
<div style="position:absolute;left:656px;top:514px;width:2px;height:2px;background:#b8b8b8;"></div>
<div style="position:absolute;left:659px;top:514px;width:2px;height:2px;background:#b8b8b8;"></div>
<div style="position:absolute;left:653px;top:517px;width:2px;height:2px;background:#b8b8b8;"></div>
<div style="position:absolute;left:656px;top:517px;width:2px;height:2px;background:#b8b8b8;"></div>
<div style="position:absolute;left:659px;top:517px;width:2px;height:2px;background:#b8b8b8;"></div></div></body></html>
